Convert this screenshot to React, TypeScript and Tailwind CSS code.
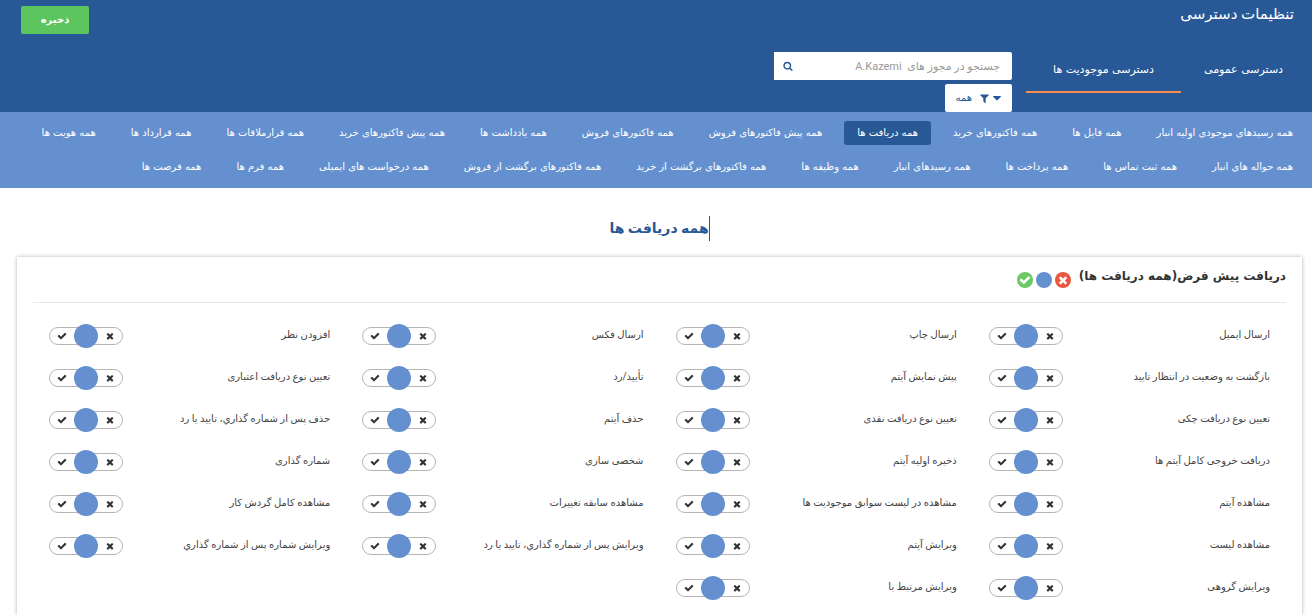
import { useState } from "react";

const icons = {
  times:
    "M1490 1322q0 40-28 68l-136 136q-28 28-68 28t-68-28l-294-294-294 294q-28 28-68 28t-68-28l-136-136q-28-28-28-68t28-68l294-294-294-294q-28-28-28-68t28-68l136-136q28-28 68-28t68 28l294 294 294-294q28-28 68-28t68 28l136 136q28 28 28 68t-28 68l-294 294 294 294q28 28 28 68z",
  check:
    "M1671 566q0 40-28 68l-724 724-136 136q-28 28-68 28t-68-28l-136-136-362-362q-28-28-28-68t28-68l136-136q28-28 68-28t68 28l294 295 656-657q28-28 68-28t68 28l136 136q28 28 28 68z",
  search:
    "M1216 832q0-185-131.5-316.5t-316.5-131.5-316.5 131.5-131.5 316.5 131.5 316.5 316.5 131.5 316.5-131.5 131.5-316.5zm512 832q0 52-38 90t-90 38q-54 0-90-38l-343-342q-179 124-399 124-143 0-273.5-55.5t-225-150-150-225-55.5-273.5 55.5-273.5 150-225 225-150 273.5-55.5 273.5 55.5 225 150 150 225 55.5 273.5q0 220-124 399l343 343q37 37 37 90z",
  filter:
    "M1595 295q17 41-14 70l-493 493v742q0 42-39 59-13 5-25 5-27 0-45-19l-256-256q-19-19-19-45v-486l-493-493q-31-29-14-70 17-39 59-39h1280q42 0 59 39z",
  caret:
    "M1408 704q0 26-19 45l-448 448q-19 19-45 19t-45-19l-448-448q-19-19-19-45t19-45 45-19h896q26 0 45 19t19 45z",
};

function Icon({ name, className }: { name: keyof typeof icons; className: string }) {
  return (
    <svg viewBox="0 0 1792 1792" fill="currentColor" aria-hidden="true" className={className}>
      <path d={icons[name]} />
    </svg>
  );
}

const entityRows = [
  [
    "همه رسیدهای موجودی اولیه انبار",
    "همه فایل ها",
    "همه فاکتورهای خرید",
    "همه دریافت ها",
    "همه پیش فاکتورهای فروش",
    "همه فاکتورهای فروش",
    "همه یادداشت ها",
    "همه پیش فاکتورهای خرید",
    "همه قرارملاقات ها",
    "همه قرارداد ها",
    "همه هویت ها",
  ],
  [
    "همه حواله های انبار",
    "همه ثبت تماس ها",
    "همه پرداخت ها",
    "همه رسیدهای انبار",
    "همه وظیفه ها",
    "همه فاکتورهای برگشت از خرید",
    "همه فاکتورهای برگشت از فروش",
    "همه درخواست های ایمیلی",
    "همه فرم ها",
    "همه فرصت ها",
  ],
];

const permissions = [
  "ارسال ایمیل",
  "ارسال چاپ",
  "ارسال فکس",
  "افزودن نظر",
  "بازگشت به وضعیت در انتظار تایید",
  "پیش نمایش آیتم",
  "تأیید/رد",
  "تعیین نوع دریافت اعتباری",
  "تعیین نوع دریافت چکی",
  "تعیین نوع دریافت نقدی",
  "حذف آیتم",
  "حذف پس از شماره گذاري، تایید یا رد",
  "دریافت خروجی کامل آیتم ها",
  "ذخیره اولیه آیتم",
  "شخصی سازی",
  "شماره گذاری",
  "مشاهده آیتم",
  "مشاهده در لیست سوابق موجودیت ها",
  "مشاهده سابقه تغییرات",
  "مشاهده کامل گردش کار",
  "مشاهده لیست",
  "ویرایش آیتم",
  "ویرایش پس از شماره گذاري، تایید یا رد",
  "ویرایش شماره پس از شماره گذاري",
  "ویرایش گروهی",
  "ویرایش مرتبط با",
];

type Access = "deny" | "none" | "allow";
const states: { value: Access; label: string; thumb: string }[] = [
  { value: "deny", label: "عدم دسترسی", thumb: "bg-[#e9573f]" },
  { value: "none", label: "پیش فرض", thumb: "bg-[#6490cf]" },
  { value: "allow", label: "دسترسی", thumb: "bg-[#6cc964]" },
];

function StateIcon({ value, className }: { value: Access; className: string }) {
  if (value === "none") return null;
  return <Icon name={value === "deny" ? "times" : "check"} className={className} />;
}

function Permission({
  name,
  value,
  onChange,
}: {
  name: string;
  value: Access;
  onChange: (value: Access) => void;
}) {
  return (
    <div className="flex h-[42px] items-center justify-between px-4">
      <span className="pb-[2px]">{name}</span>
      <div
        role="radiogroup"
        aria-label={name}
        className="flex h-[18px] w-[74px] shrink-0 items-center justify-between rounded-full border border-[#b5b5b5] text-[#333]"
      >
        {states.map((s) => (
          <label
            key={s.value}
            className={
              "relative flex size-6 cursor-pointer items-center justify-center rounded-full " +
              (s.value === value ? s.thumb : "")
            }
          >
            <input
              type="radio"
              name={name}
              aria-label={s.label}
              checked={s.value === value}
              onChange={() => onChange(s.value)}
              className="sr-only"
            />
            <StateIcon value={s.value} className="size-[10px]" />
          </label>
        ))}
      </div>
    </div>
  );
}

export default function App() {
  const [entity, setEntity] = useState("همه دریافت ها");
  const [access, setAccess] = useState<Record<string, Access>>({});

  const setAll = (value: Access) =>
    setAccess(Object.fromEntries(permissions.map((p) => [p, value])));

  return (
    <div
      dir="rtl"
      className="flex min-h-screen flex-col bg-white font-[Roboto,'DejaVu_Sans',sans-serif] text-[10px] leading-4 text-[#444]"
    >
      <header className="bg-[#285896] text-white">
        <div className="flex h-10 items-start justify-between pr-[18px] pl-[21px]">
          <h1 className="pt-[2px] text-[15px] leading-6">تنظیمات دسترسی</h1>
          <button className="mt-[6px] h-7 w-[68px] rounded-[2px] bg-[#5cc55e] text-[10px] font-bold">
            ذخیره
          </button>
        </div>
        <div className="flex h-[72px] items-start pt-3 pr-[6px]">
          <nav className="flex text-center font-['DejaVu_Sans',sans-serif] text-[11px] leading-5">
            <a href="#general" className="h-[41px] min-w-[125px] px-5 pt-2">
              دسترسی عمومی
            </a>
            <a
              href="#entities"
              aria-current="page"
              className="h-[41px] min-w-[155px] border-b-2 border-[#f98d4f] px-5 pt-2"
            >
              دسترسی موجودیت ها
            </a>
          </nav>
          <div className="mr-[14px] flex w-[238px] flex-col items-start gap-1">
            <div className="flex h-7 w-full items-center rounded-r-[2px] bg-white pr-3 pl-[9px]">
              <input
                type="search"
                aria-label="جستجو در مجوز ها"
                placeholder={"جستجو در مجوز های \u00a0A.Kazemi"}
                className="h-full min-w-0 flex-1 bg-transparent text-[11px] text-[#444] outline-none placeholder:text-[#999]"
              />
              <button aria-label="جستجو" className="text-[#285896]">
                <Icon name="search" className="size-[10px]" />
              </button>
            </div>
            <label className="flex h-7 w-[67px] items-center rounded-[2px] bg-white pr-[8px] text-[#285896]">
              <Icon name="caret" className="size-[14px] shrink-0" />
              <Icon name="filter" className="size-[11px] shrink-0" />
              <select aria-label="فیلتر" className="min-w-0 flex-1 appearance-none bg-transparent pr-[7px] text-[10px] outline-none">
                <option>همه</option>
              </select>
            </label>
          </div>
        </div>
      </header>

      <nav
        aria-label="موجودیت ها"
        className="flex flex-col gap-[10px] bg-[#6490cf] py-[9px] pr-[6px] font-['DejaVu_Sans',sans-serif] text-white"
      >
        {entityRows.map((row, i) => (
          <div key={i} className="flex gap-[9px]">
            {row.map((item) => (
              <button
                key={item}
                onClick={() => setEntity(item)}
                className={
                  "h-6 rounded-[3px] px-[13px] whitespace-nowrap " +
                  (item === entity ? "bg-[#285896]" : "")
                }
              >
                {item}
              </button>
            ))}
          </div>
        ))}
      </nav>

      <main className="flex flex-1 flex-col pr-[10px] pl-[17px]">
        <h2 className="mt-7 self-center border-r border-[#285896] text-[14px] leading-[25px] font-bold text-[#285896]">
          {entity}
        </h2>
        <section className="mt-4 flex-1 bg-white px-4 shadow-[0_0_4px_rgba(0,0,0,0.3)]">
          <div className="flex h-[46px] items-start gap-2 border-b border-[#e8e8e8] pt-[7px]">
            <h3 className="min-w-[207px] font-['DejaVu_Sans',sans-serif] text-[12px] leading-6 font-bold text-[#333]">
              دریافت پیش فرض({entity})
            </h3>
            <div className="flex gap-[3px] pt-2 text-white">
              {states.map((s) => (
                <button
                  key={s.value}
                  aria-label={s.label}
                  onClick={() => setAll(s.value)}
                  className={"flex size-4 items-center justify-center rounded-full " + s.thumb}
                >
                  <StateIcon value={s.value} className="size-3" />
                </button>
              ))}
            </div>
          </div>
          <div className="grid grid-cols-4 pt-3">
            {permissions.map((p) => (
              <Permission
                key={p}
                name={p}
                value={access[p] ?? "none"}
                onChange={(value) => setAccess({ ...access, [p]: value })}
              />
            ))}
          </div>
        </section>
      </main>
    </div>
  );
}
